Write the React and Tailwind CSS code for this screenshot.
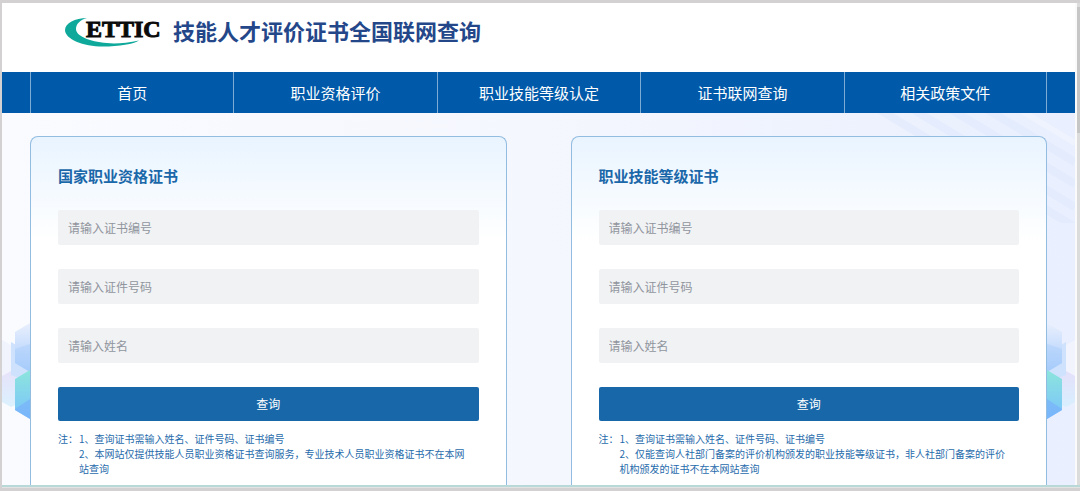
import React from 'react'
import clsx from 'clsx'

const NAV = ['首页', '职业资格评价', '职业技能等级认定', '证书联网查询', '相关政策文件']

const FIELDS = [
  { name: 'certNo', placeholder: '请输入证书编号' },
  { name: 'idNo', placeholder: '请输入证件号码' },
  { name: 'fullName', placeholder: '请输入姓名' },
]

const FORMS = [
  {
    id: 'vocational',
    title: '国家职业资格证书',
    notes: [
      '1、查询证书需输入姓名、证件号码、证书编号',
      '2、本网站仅提供技能人员职业资格证书查询服务，专业技术人员职业资格证书不在本网站查询',
    ],
  },
  {
    id: 'skill',
    title: '职业技能等级证书',
    notes: [
      '1、查询证书需输入姓名、证件号码、证书编号',
      '2、仅能查询人社部门备案的评价机构颁发的职业技能等级证书，非人社部门备案的评价机构颁发的证书不在本网站查询',
    ],
  },
]

function Logo() {
  return (
    <svg width="100" height="40" viewBox="0 -6 100 40" role="img" aria-label="CETTIC">
      <path
        d="M22 1C10 1 0 6 0 13C0 22 18 29.5 38 29.5C54 29.5 69 27 74 23.5C62 26 50 27 42 26C24 24.5 11 19 11 12C11 7 15 3 22 1Z"
        fill="#0fa99c"
      />
      <text
        x="21"
        y="20"
        fill="#0a0a0a"
        stroke="#0a0a0a"
        strokeWidth="1"
        fontFamily="'Liberation Serif', serif"
        fontWeight="700"
        fontSize="24"
      >
        ETTIC
      </text>
    </svg>
  )
}

function Hexagons({ id, className }) {
  return (
    <svg className={className} width="28" height="100" viewBox="0 0 28 100" aria-hidden="true">
      <defs>
        <linearGradient id={`${id}-pale`} x1="0" y1="0" x2="0" y2="1">
          <stop offset="0" stopColor="#e9effd" />
          <stop offset="1" stopColor="#a6ccfc" />
        </linearGradient>
        <linearGradient id={`${id}-teal`} x1="0" y1="0" x2="0" y2="1">
          <stop offset="0" stopColor="#8ce5dc" />
          <stop offset="1" stopColor="#7ac2fd" />
        </linearGradient>
        <linearGradient id={`${id}-lilac`} x1="0" y1="0" x2="0" y2="1">
          <stop offset="0" stopColor="#e2dcf9" />
          <stop offset="1" stopColor="#d4effe" />
        </linearGradient>
      </defs>
      <path d="M0 20L9 25V51L0 56Z" fill="#f1f3fd" />
      <path d="M0 56L9 51L20 58V82L9 87L0 82Z" fill={`url(#${id}-lilac)`} opacity="0.8" />
      <path d="M9 22L28 33V62L9 55Z" fill="#cfe2fd" />
      <path d="M13 12L28 3V52L13 43Z" fill={`url(#${id}-pale)`} />
      <path d="M13 29L28 24V52L13 43Z" fill="#a4cafb" opacity="0.4" />
      <path d="M13 59L28 50V99L13 90Z" fill={`url(#${id}-teal)`} />
      <path d="M13 89L28 79V99L13 90Z" fill="#78aefb" opacity="0.6" />
    </svg>
  )
}

function QueryForm({ id, title, notes }) {
  return (
    <form
      onSubmit={(e) => e.preventDefault()}
      className="relative flex-1 rounded-t-lg border border-b-0 border-[#92bce0] bg-white bg-linear-to-b from-[#e9f4ff] to-white to-30% px-[27px] pt-7 pb-[9px]"
    >
      <h2 className="text-[15px] leading-[22px] font-bold text-[#1a67a9]">{title}</h2>
      <div className="mt-[23px] flex flex-col gap-6">
        {FIELDS.map((field) => (
          <input
            key={field.name}
            id={`${id}-${field.name}`}
            name={field.name}
            type="text"
            aria-label={field.placeholder}
            placeholder={field.placeholder}
            className="h-[35px] w-full rounded-xs bg-[#f1f2f4] px-[10px] text-xs text-gray-700 outline-none placeholder:text-[#90959d]"
          />
        ))}
        <button type="submit" className="h-[34px] w-full rounded-xs bg-[#1868a9] text-xs text-white">
          查询
        </button>
      </div>
      <div className="mt-[10px] flex pr-3 text-[10px] leading-[15px] text-[#1f6bab]">
        <span className="w-[21px] shrink-0">注：</span>
        <div>
          {notes.map((note) => (
            <p key={note}>{note}</p>
          ))}
        </div>
      </div>
    </form>
  )
}

export default function App() {
  return (
    <div className="flex min-h-screen flex-col border-t-[3px] border-b-[3px] border-l-2 border-[#d3d1d2] font-['Noto_Sans_CJK_SC',sans-serif]">
      <div className="flex flex-1">
        <div className="flex flex-1 flex-col">
          {/* Brand */}
          <header className="flex h-[69px] items-start gap-2 bg-white pt-2 pl-[63px]">
            <Logo />
            <h1 className="text-[22px] leading-[38px] font-bold text-[#24478a]">技能人才评价证书全国联网查询</h1>
          </header>

          {/* Navigation */}
          <nav className="bg-[#0059a9] px-7">
            <ul className="grid grid-cols-5">
              {NAV.map((item, i) => (
                <li key={item} className={clsx('border-l border-[#7eabd4]', i === NAV.length - 1 && 'border-r')}>
                  <a href="#" className="block text-center text-[15px] leading-[41px] text-white">
                    {item}
                  </a>
                </li>
              ))}
            </ul>
          </nav>

          {/* Query forms */}
          <main className="relative flex flex-1 gap-16 bg-linear-to-r from-[#f9fbff] via-[#f5f7fe] to-[#e9effe] px-7 pt-[23px]">
            <svg
              className="absolute top-0 right-0"
              width="220"
              height="110"
              viewBox="0 0 220 110"
              aria-hidden="true"
            >
              <g stroke="#e0eafd" strokeWidth="8" opacity="0.6">
                <path d="M20 -6L220 114" />
                <path d="M54 -6L220 94" />
                <path d="M92 -6L220 71" />
                <path d="M128 -6L220 49" />
              </g>
              <path d="M160 -6L220 30" stroke="#f2f5ff" strokeWidth="6" opacity="0.7" />
            </svg>
            <Hexagons id="hex-left" className="absolute top-[207px] left-0" />
            <Hexagons id="hex-right" className="absolute top-[207px] right-0 -scale-x-100" />
            {FORMS.map((form) => (
              <QueryForm key={form.id} {...form} />
            ))}
          </main>
        </div>

        {/* Scroll bar */}
        <div className="w-[5px] border-l-2 border-[#fafafa] bg-[#dcdcdc]">
          <div className="mt-1 h-[126px] bg-[#c6c6c6]" />
        </div>
      </div>
      <div className="h-[3px] border-b border-[#e3e3e3] bg-[#b9d9d8]" />
    </div>
  )
}
